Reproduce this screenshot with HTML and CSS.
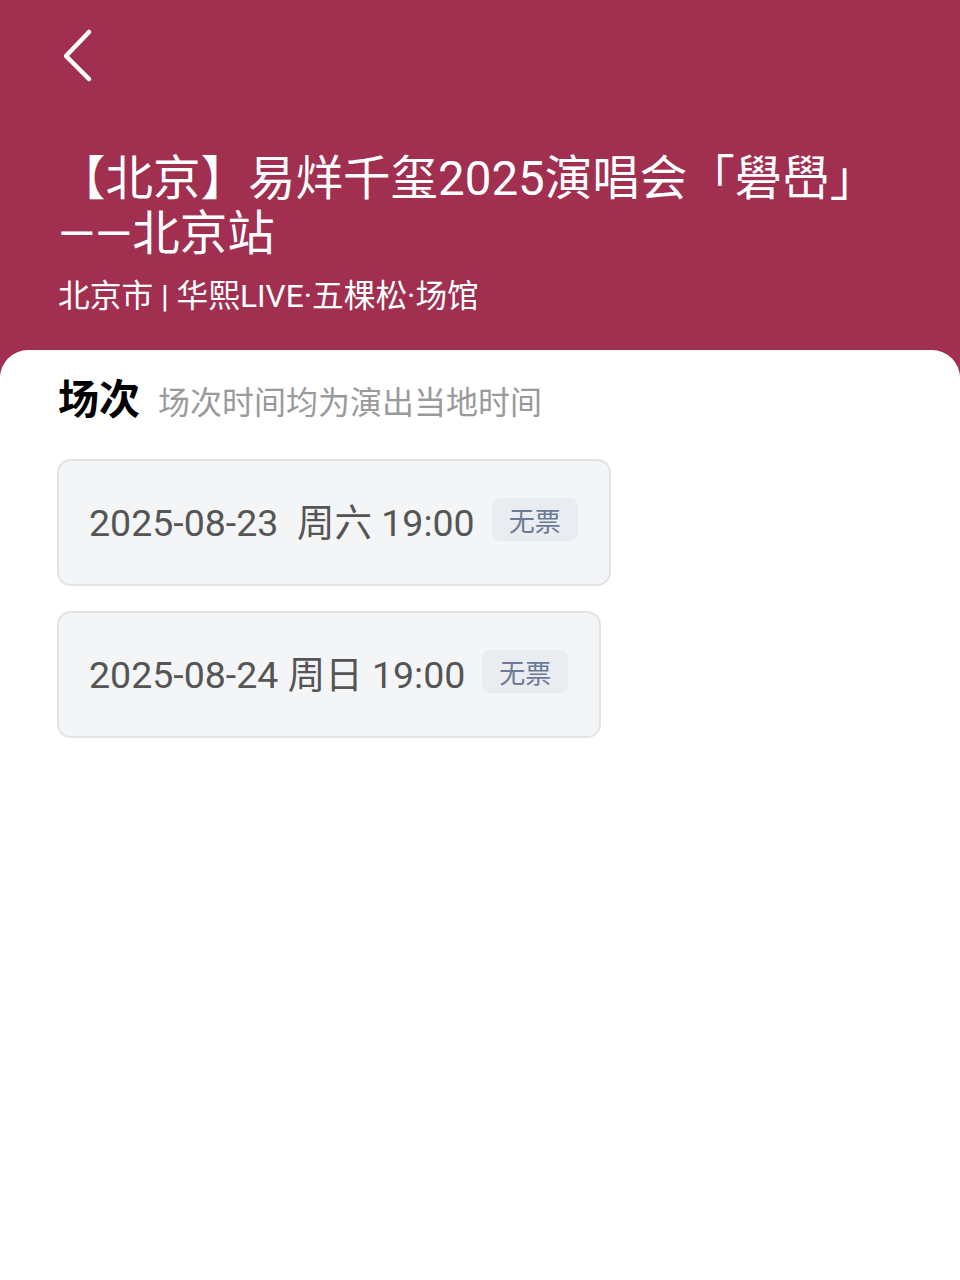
FILE: index.html
```html
<!DOCTYPE html>
<html lang="zh-CN">

<head>
  <meta charset="UTF-8">
  <meta name="viewport" content="width=device-width, initial-scale=1.0">
  <title>选择场次</title>
  <link rel="stylesheet" href="styles.css">
</head>

<body>
  <div class="page">
    <!-- 顶部演出信息 -->
    <header class="show-head">
      <a href="javascript:;" class="back">
        <svg width="40" height="64" viewBox="0 0 40 64">
          <path d="M31 8 L8 32 L31 55" fill="none" stroke="#fff" stroke-width="4.5" stroke-linecap="round" stroke-linejoin="round" />
        </svg>
      </a>
      <h1 class="show-title">【北京】易烊千玺2025演唱会「礐嶨」——北京站</h1>
      <p class="show-venue">北京市 | 华熙LIVE·五棵松·场馆</p>
    </header>

    <!-- 场次列表 -->
    <section class="sheet">
      <div class="sheet-head">
        <h2>场次</h2>
        <span class="hint">场次时间均为演出当地时间</span>
      </div>
      <ul class="sessions">
        <li class="session">
          <span class="time">2025-08-23  周六 19:00</span>
          <span class="tag">无票</span>
        </li>
        <li class="session">
          <span class="time">2025-08-24 周日 19:00</span>
          <span class="tag">无票</span>
        </li>
      </ul>
    </section>
  </div>
</body>

</html>
```

FILE: styles.css
```css
* {
  margin: 0;
  padding: 0;
  box-sizing: border-box;
}

body {
  font-family: Roboto, "Noto Sans CJK SC", sans-serif;
  background: #fff;
}

.page {
  min-height: 1280px;
  background: #a02f50;
  display: flex;
  flex-direction: column;
}

/* 顶部 */
.show-head {
  padding: 24px 58px 33px;
  color: #fff;
}
.back {
  display: block;
  width: 40px;
  height: 64px;
}
.back svg {
  display: block;
}
.show-title {
  margin-top: 64px;
  font-size: 47.5px;
  line-height: 55px;
  font-weight: 400;
}
.show-venue {
  margin-top: 15px;
  font-size: 31.7px;
  line-height: 40px;
}

/* 白色面板 */
.sheet {
  flex: 1;
  background: #fff;
  border-radius: 28px 28px 0 0;
  padding: 26px 58px 0 57px;
}
.sheet-head {
  display: flex;
  align-items: baseline;
  gap: 18px;
  padding-left: 1px;
}
.sheet-head h2 {
  font-size: 41px;
  line-height: 48px;
  font-weight: 700;
  color: #000;
}
.sheet-head .hint {
  font-size: 32px;
  color: #9a9a9a;
}

.sessions {
  list-style: none;
  margin-top: 35px;
  display: flex;
  flex-direction: column;
  align-items: flex-start;
  gap: 25px;
}
.session {
  display: flex;
  align-items: center;
  gap: 17px;
  height: 127px;
  padding: 0 31px 6px 30px;
  background: #f4f5f7;
  border: 2px solid #e2e3e6;
  border-radius: 14px;
}
.session .time {
  white-space: pre;
  font-size: 37.5px;
  color: #555;
}
.session .tag {
  display: flex;
  align-items: center;
  height: 43px;
  padding: 0 17px;
  border-radius: 8px;
  background: #e9ecf0;
  color: #6c7a96;
  font-size: 26px;
}
```
